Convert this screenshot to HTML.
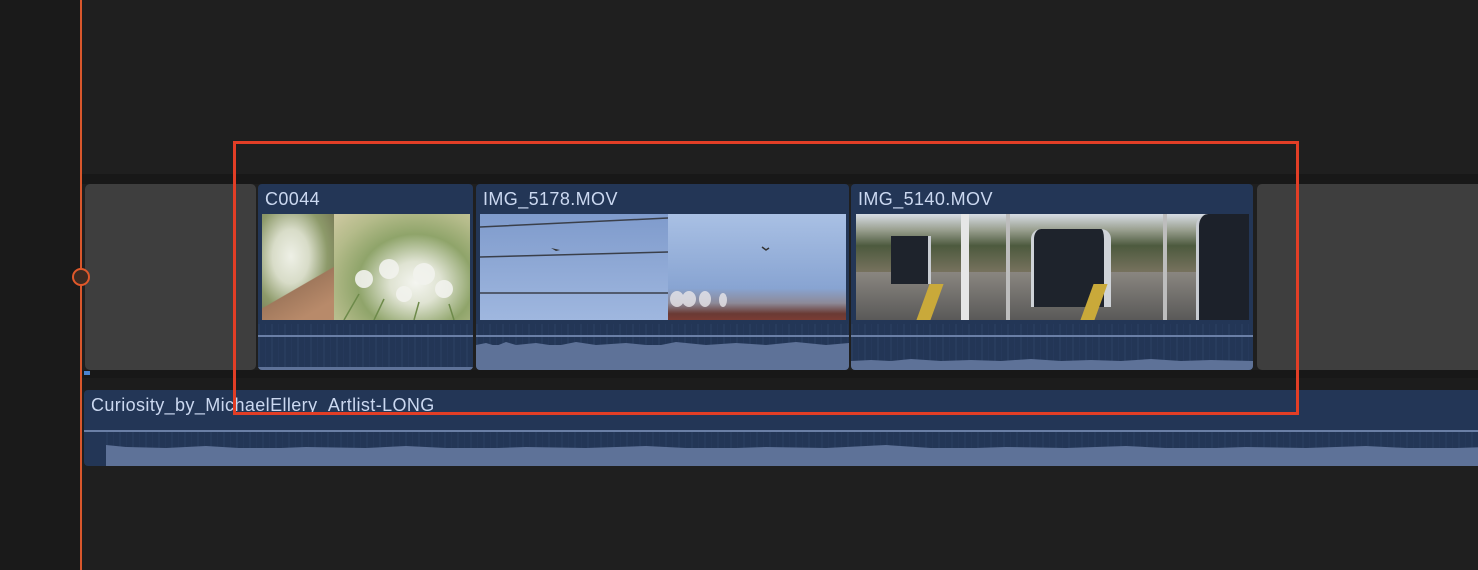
<!DOCTYPE html>
<html><head><meta charset="utf-8"><style>
*{margin:0;padding:0;box-sizing:border-box}
body{width:1478px;height:570px;background:#1f1f1f;position:relative;overflow:hidden;font-family:"Liberation Sans",sans-serif}
.a{position:absolute}
.clip{position:absolute;background:#233656;border-radius:4px;overflow:hidden}
.title{position:absolute;left:7px;top:5px;color:#cbd8f0;font-size:18px;letter-spacing:0.4px}
.line{position:absolute;left:0;right:0;height:2px;background:#6a7fa6}
.wave{position:absolute;left:0;right:0;bottom:0;background:#5e7298}
.dk{position:absolute;left:0;right:0;opacity:.4;background:repeating-linear-gradient(90deg,#2f4468 0 2px,#233656 2px 7px,#2a3e62 7px 8px,#233656 8px 13px)}
.gray{position:absolute;background:#3e3e3e;border-radius:5px}
</style></head><body>
<div class="a" style="left:0;top:0;width:82px;height:570px;background:#1a1a1a"></div>
<div class="a" style="left:82px;top:174px;width:1396px;height:10px;background:#181818"></div>
<div class="a" style="left:82px;top:370px;width:1396px;height:20px;background:#181818"></div>
<div class="a" style="left:82px;top:378px;width:1396px;height:12px;background:#1c1c1c"></div>

<div class="gray" style="left:85px;top:184px;width:171px;height:186px"></div>
<div class="gray" style="left:1257px;top:184px;width:230px;height:186px"></div>
<div class="a" style="left:84px;top:371px;width:6px;height:4px;background:#4a84d0"></div>

<!-- C0044 -->
<div class="clip" style="left:258px;top:184px;width:215px;height:186px">
 <div class="title">C0044</div>
 <div class="dk" style="top:140px;bottom:3px"></div>
 <div class="a" style="left:4px;top:30px;width:72px;height:106px;background:radial-gradient(ellipse at 40% 40%,#eef0e6 0%,#d8dcc8 30%,#8d9a6a 60%,#6d6a4c 100%)"></div>
 <div class="a" style="left:4px;top:80px;width:72px;height:56px;background:linear-gradient(150deg,transparent 45%,#a0785c 46%,#b88a6a 80%)"></div>
 <div class="a" style="left:76px;top:30px;width:136px;height:106px;background:radial-gradient(ellipse at 60% 65%,#f4f5f0 0%,#dfe3d2 22%,#8fa46a 50%,#b4bb8a 75%,#cfc9a2 100%)"></div>
 <svg class="a" style="left:76px;top:30px" width="136" height="106"><g fill="#f2f3ee" opacity=".9"><circle cx="30" cy="65" r="9"/><circle cx="55" cy="55" r="10"/><circle cx="90" cy="60" r="11"/><circle cx="110" cy="75" r="9"/><circle cx="70" cy="80" r="8"/></g><g stroke="#6d8a4a" stroke-width="1.5"><path d="M10 106 L25 80 M40 106 L50 85 M80 106 L85 88 M120 106 L115 90"/></g></svg>
 <div class="line" style="top:151px"></div>
 <div class="wave" style="height:3px"></div>
</div>

<!-- IMG_5178 -->
<div class="clip" style="left:476px;top:184px;width:373px;height:186px">
 <div class="title">IMG_5178.MOV</div>
 <div class="dk" style="top:140px;bottom:20px"></div>
 <div class="a" style="left:4px;top:30px;width:188px;height:106px;background:linear-gradient(180deg,#7f9bcc,#9fb7df)"></div>
 <svg class="a" style="left:4px;top:30px" width="188" height="106"><path d="M0 13 L188 4 M0 43 L188 38 M0 79 L188 79" stroke="#3a3f4a" stroke-width="1.5"/><path d="M71 34 l9 2 -4 1z" fill="#333"/></svg>
 <div class="a" style="left:192px;top:30px;width:178px;height:106px;background:linear-gradient(180deg,#a9c0e4,#88a4d2 70%,#8d8a98 84%,#6a3a34 94%,#7a3c34 100%)"></div>
 <svg class="a" style="left:192px;top:30px" width="178" height="106"><path d="M94 33 l4 3 3-2" stroke="#333" fill="none" stroke-width="1.5"/><g fill="#e8e6ea" opacity=".8"><ellipse cx="9" cy="85" rx="7" ry="8"/><ellipse cx="21" cy="85" rx="7" ry="8"/><ellipse cx="37" cy="85" rx="6" ry="8"/><ellipse cx="55" cy="86" rx="4" ry="7"/></g></svg>
 <div class="line" style="top:151px"></div>
 <div class="wave" style="height:25px"></div>
 <svg class="a" style="left:0;bottom:20px" width="373" height="10"><path d="M0 10 L0 5 10 3 20 6 30 2 40 5 60 3 80 6 100 2 120 5 150 3 180 6 200 2 230 5 260 3 290 5 320 2 350 5 373 3 373 10Z" fill="#5e7298"/></svg>
</div>

<!-- IMG_5140 -->
<div class="clip" style="left:851px;top:184px;width:402px;height:186px">
 <div class="title">IMG_5140.MOV</div>
 <div class="dk" style="top:140px;bottom:8px"></div>
 <div class="a" style="left:5px;top:30px;width:393px;height:106px;background:linear-gradient(180deg,#d6dce4 0%,#9aa090 15%,#4d5a3e 30%,#77725e 55%,#6c6a68 70%,#58575c 100%)"></div>
 <div class="a" style="left:5px;top:88px;width:393px;height:48px;background:linear-gradient(180deg,#8a8680,#5a5958)"></div>
 <div class="a" style="left:40px;top:52px;width:40px;height:48px;background:#1e232c;border-right:3px solid #c8ccd2"></div>
 <div class="a" style="left:155px;top:30px;width:4px;height:106px;background:#bdbdbd"></div>
 <div class="a" style="left:312px;top:30px;width:4px;height:106px;background:#bdbdbd"></div>
 <div class="a" style="left:110px;top:30px;width:8px;height:106px;background:#e6e6e6"></div>
 <div class="a" style="left:180px;top:45px;width:80px;height:78px;background:#1e232c;border-radius:10px 10px 0 0;border-right:7px solid #cfd3d8;border-left:3px solid #cfd3d8"></div>
 <div class="a" style="left:345px;top:30px;width:53px;height:106px;background:#1c212a;border-left:3px solid #c8ccd2;border-radius:12px 0 0 0"></div>
 <div class="a" style="left:72px;top:100px;width:14px;height:36px;background:#c9a93a;transform:skewX(-20deg)"></div>
 <div class="a" style="left:236px;top:100px;width:14px;height:36px;background:#c9a93a;transform:skewX(-20deg)"></div>
 <div class="line" style="top:151px"></div>
 <div class="wave" style="height:8px"></div>
 <svg class="a" style="left:0;bottom:7px" width="402" height="5"><path d="M0 5 L0 3 20 2 40 3 60 1 90 3 120 2 150 3 180 1 210 3 240 2 270 3 300 1 330 3 360 2 402 3 402 5Z" fill="#5e7298"/></svg>
</div>

<!-- Audio -->
<div class="clip" style="left:84px;top:390px;width:1400px;height:76px">
 <div class="title" style="top:5px">Curiosity_by_MichaelEllery_Artlist-LONG</div>
 <div class="dk" style="left:22px;top:42px;bottom:18px;opacity:.35"></div>
 <div class="line" style="top:40px"></div>
 <div class="wave" style="left:22px;height:18px"></div>
 <svg class="a" style="left:22px;bottom:15px" width="1380" height="8"><path d="M0 8 L0 2 20 4 60 5 100 3 150 6 200 4 260 5 300 3 360 6 420 4 480 5 540 3 600 6 660 4 720 5 780 2 840 6 900 4 960 5 1020 3 1080 6 1140 4 1200 5 1260 3 1320 6 1380 4 1380 8Z" fill="#5e7298"/></svg>
</div>

<!-- playhead -->
<div class="a" style="left:80px;top:0;width:2px;height:570px;background:#d9572c"></div>
<div class="a" style="left:72px;top:268px;width:18px;height:18px;border:2px solid #e0582a;border-radius:50%;background:#3b2a22"></div>

<!-- red box -->
<div class="a" style="left:233px;top:141px;width:1066px;height:274px;border:3px solid #e23e26"></div>
</body></html>
